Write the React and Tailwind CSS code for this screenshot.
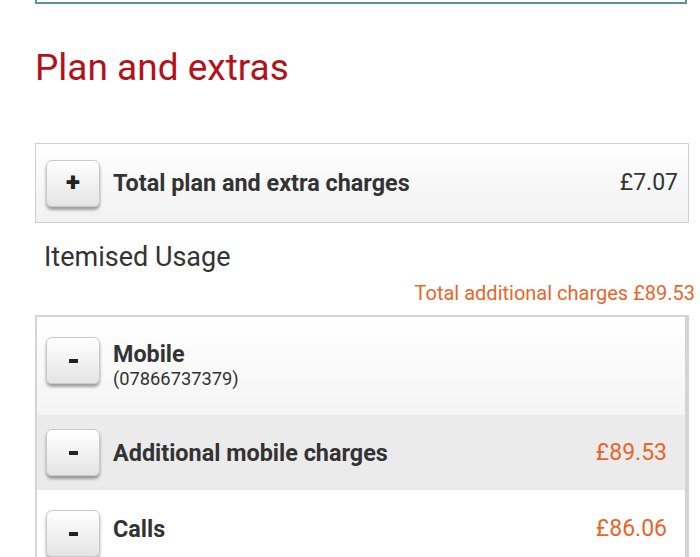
function ToggleButton({ sign }) {
  return (
    <div className="w-[54px] h-[47px] shrink-0 rounded-[6px] border border-[#c9c9c9] bg-gradient-to-b from-white to-[#e4e4e4] shadow-[0_3px_3px_rgba(0,0,0,0.35)] flex items-center justify-center text-[#222]">
      {sign === '+' ? (
        <span className="text-[26px] font-black leading-none -mt-[2px]">+</span>
      ) : (
        <span className="w-[9px] h-[4px] bg-[#222] block" />
      )}
    </div>
  )
}

function App() {
  return (
    <div className="min-h-screen bg-white font-['Roboto',sans-serif] text-[#333] overflow-hidden">
      {/* Bottom edge of the previous panel */}
      <div className="ml-[35px] mr-[13px] h-[4px] border-x-2 border-b-2 border-[#5a9494]" />

      <h1 className="ml-[35px] mt-[42px] text-[37px] leading-[44px] text-[#b3121b]">Plan and extras</h1>

      {/* Plan total */}
      <div className="ml-[35px] mr-[11px] mt-[53px] h-[80px] border border-[#cfcfcf] bg-gradient-to-b from-white to-[#f1f1f1] flex items-center pl-[10px] pr-[10px]">
        <ToggleButton sign="+" />
        <span className="ml-[13px] text-[23.4px] leading-[30px] font-bold text-[#333]">Total plan and extra charges</span>
        <span className="ml-auto text-[23px] leading-[30px] text-[#333]">£7.07</span>
      </div>

      <div className="ml-[44px] mt-[16px] text-[27px] leading-[36px] text-[#333]">Itemised Usage</div>

      <div className="mr-[5px] mt-[5px] text-right text-[20px] leading-[26px] text-[#e8662a]">Total additional charges £89.53</div>

      {/* Itemised list */}
      <div className="ml-[35px] mr-[11px] mt-[9px] border-t-2 border-l-2 border-r-4 border-[#d4d4d4]">
        <div className="h-[98px] bg-gradient-to-b from-white to-[#f4f4f4] flex items-start pt-[20px] pl-[9px] pr-[18px]">
          <ToggleButton sign="-" />
          <div className="ml-[13px] flex flex-col">
            <span className="text-[23.3px] font-bold leading-[28px] mt-[3px] text-[#333]">Mobile</span>
            <span className="text-[18.3px] leading-[22px] text-[#333]">(07866737379)</span>
          </div>
        </div>
        <div className="h-[75px] bg-[#ebebeb] flex items-center pl-[9px] pr-[18px]">
          <ToggleButton sign="-" />
          <span className="ml-[13px] text-[23.4px] leading-[30px] font-bold text-[#333]">Additional mobile charges</span>
          <span className="ml-auto text-[23px] leading-[30px] text-[#e8662a]">£89.53</span>
        </div>
        <div className="h-[80px] bg-white flex items-start pt-[20px] pl-[9px] pr-[18px]">
          <ToggleButton sign="-" />
          <span className="ml-[13px] mt-[4px] text-[23.4px] leading-[30px] font-bold text-[#333]">Calls</span>
          <span className="ml-auto mt-[4px] text-[23px] leading-[30px] text-[#e8662a]">£86.06</span>
        </div>
      </div>
    </div>
  )
}

export default App
